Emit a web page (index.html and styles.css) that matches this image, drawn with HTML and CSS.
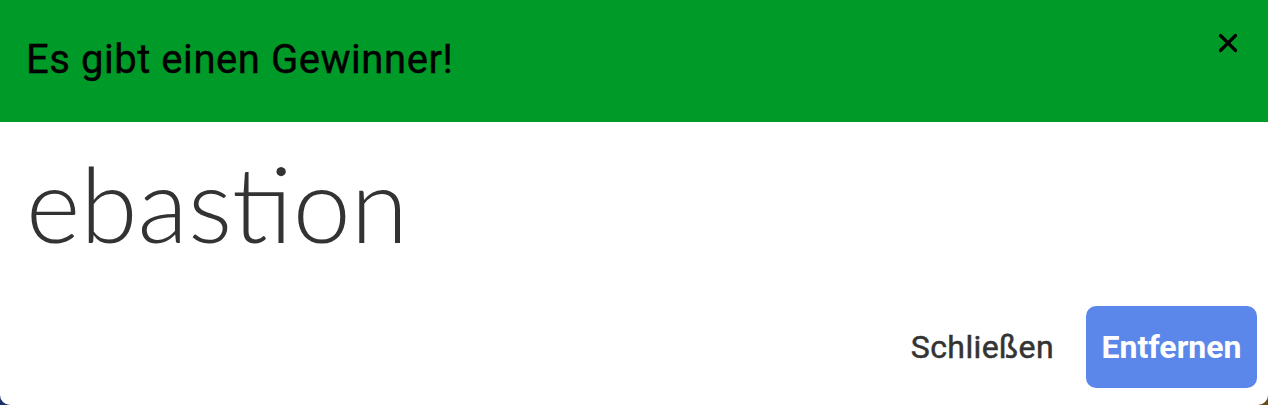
FILE: index.html
```html
<!DOCTYPE html>
<html lang="de">
<head>
<meta charset="utf-8">
<title>Gewinner</title>
<link rel="stylesheet" href="styles.css">
</head>
<body>
<div class="modal">
  <header class="modal-header">
    <h1 class="modal-title">Es gibt einen Gewinner!</h1>
    <button class="close" aria-label="Schließen">
      <svg width="22" height="22" viewBox="0 0 22 22"><path d="M3.5 3.5 L18.5 18.5 M18.5 3.5 L3.5 18.5" stroke="#000" stroke-width="3.2" stroke-linecap="round"/></svg>
    </button>
  </header>
  <main class="modal-body">
    <p class="winner">ebastion</p>
  </main>
  <footer class="modal-footer">
    <button class="btn btn-text">Schließen</button>
    <button class="btn btn-primary">Entfernen</button>
  </footer>
</div>
</body>
</html>
```
FILE: styles.css
```css
html, body {
  margin: 0;
  padding: 0;
  height: 405px;
  overflow: hidden;
}
body {
  background: linear-gradient(90deg, #1d2f6b 0%, #1d2f6b 50%, #6b4a12 50%, #6b4a12 100%);
  font-family: Roboto, "Liberation Sans", sans-serif;
}
.modal {
  background: #fff;
  height: 405px;
  display: flex;
  flex-direction: column;
  border-radius: 0 0 10px 10px;
  overflow: hidden;
}
.modal-header {
  background: #009a28;
  height: 122px;
  display: flex;
  justify-content: space-between;
  align-items: flex-start;
  padding: 0 26px;
  box-sizing: border-box;
}
.modal-title {
  margin: 0;
  padding-top: 34px;
  font-size: 40px;
  font-weight: 400;
  -webkit-text-stroke: 0.4px #000;
  letter-spacing: 0.55px;
  color: #000;
  line-height: 52px;
}
.close {
  background: none;
  border: 0;
  padding: 0;
  margin-top: 32px;
  margin-right: 3px;
  width: 22px;
  height: 22px;
  display: flex;
}
.modal-body {
  padding: 0 26px;
  height: 176px;
}
.winner {
  margin: 0;
  padding-top: 29px;
  font-family: Lato, "Noto Sans", sans-serif;
  font-weight: 300;
  font-size: 104px;
  line-height: 104px;
  color: #333;
}
.modal-footer {
  display: flex;
  justify-content: flex-end;
  align-items: center;
  gap: 32px;
  padding: 8px 11px 0 0;
}
.btn {
  font-family: Roboto, "Liberation Sans", sans-serif;
  font-size: 32px;
  border: 0;
  cursor: pointer;
}
.btn-text {
  background: none;
  color: #333;
  font-weight: 400;
  -webkit-text-stroke: 0.5px #333;
  letter-spacing: 0.4px;
  padding: 0;
}
.btn-primary {
  background: #5c87ea;
  color: #fff;
  width: 171px;
  height: 82px;
  border-radius: 10px;
  font-weight: 700;
  padding: 0;
}
```
